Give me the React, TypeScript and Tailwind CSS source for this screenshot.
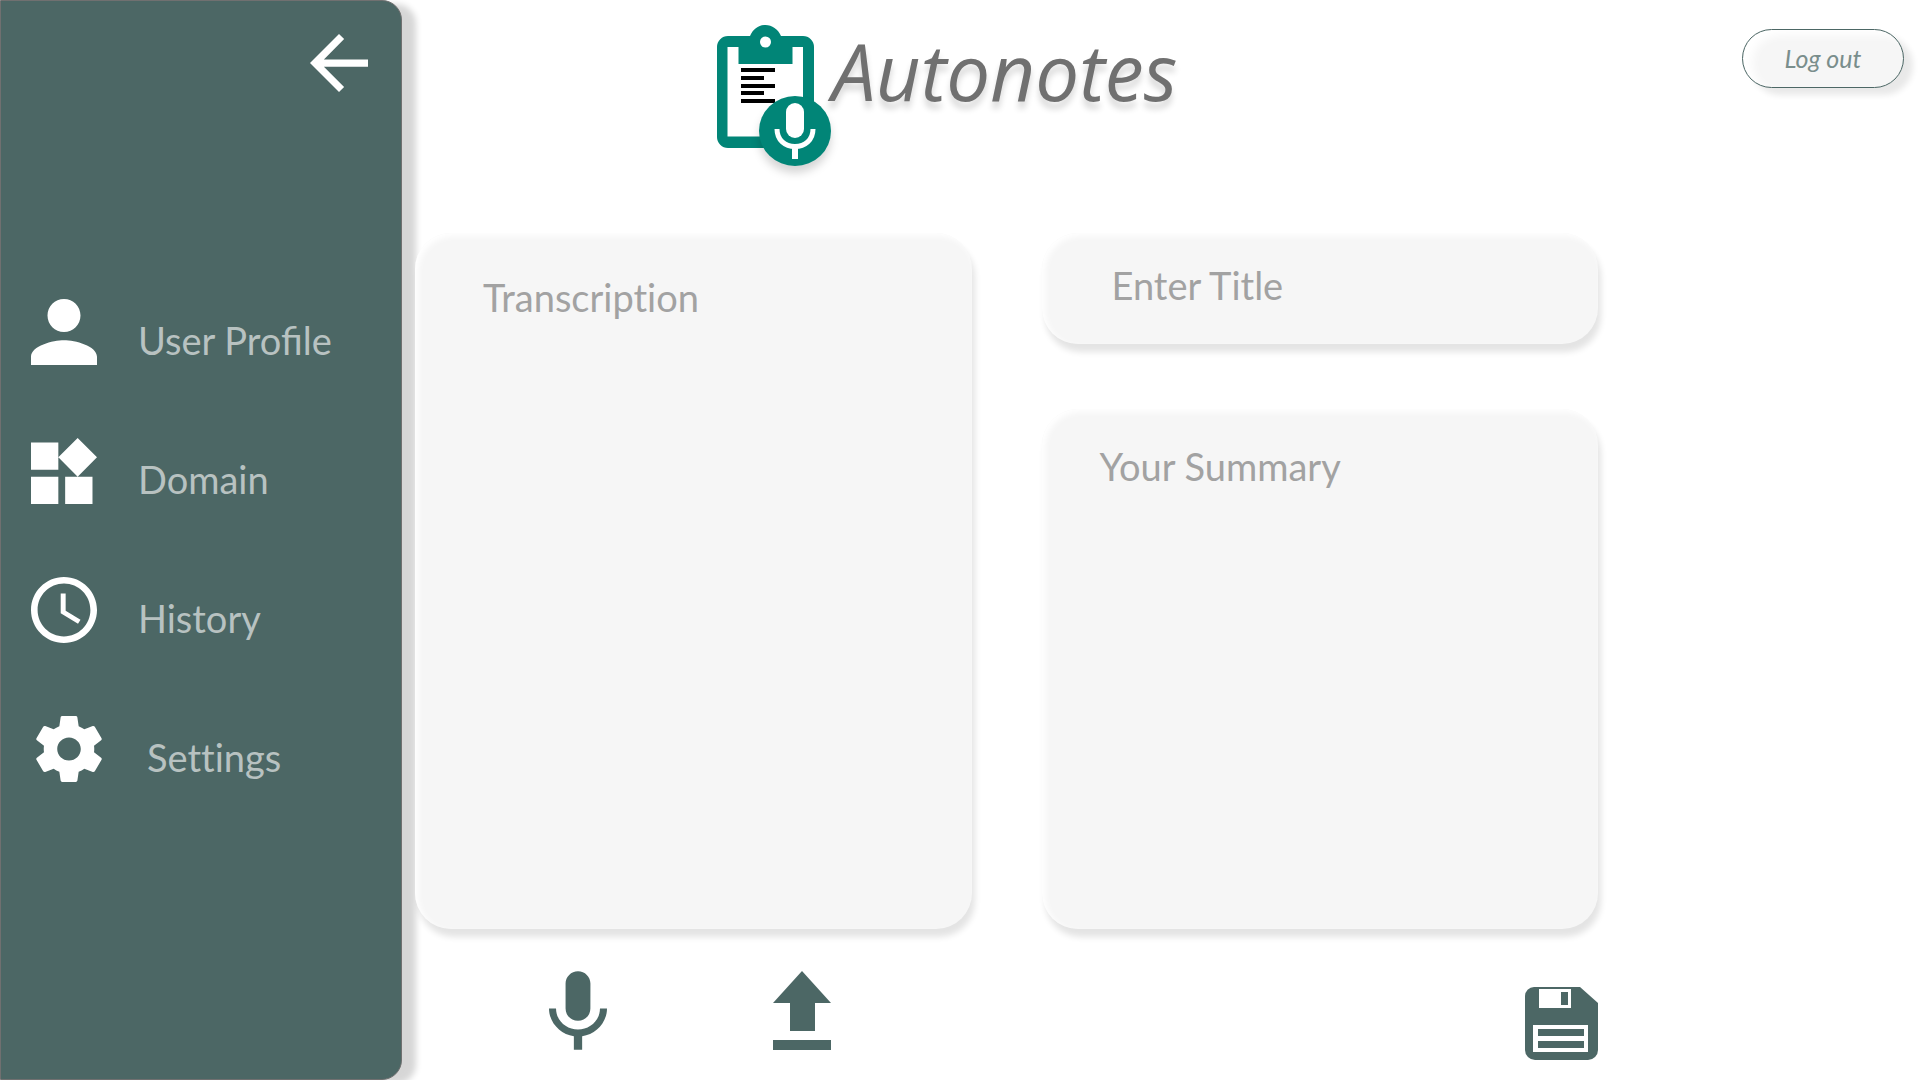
import type { ReactNode } from "react";

const FIELD =
  "block w-full resize-none rounded-[36px] bg-[#f6f6f6] text-[38px] leading-[44px] text-[#707070] [font-variant-ligatures:none] placeholder:text-[#a2a2a2] placeholder:opacity-100 outline-none shadow-[3px_8px_6px_rgba(0,0,0,0.11),inset_3px_3px_6px_#ffffff]";

function Logo() {
  return (
    <svg className="h-36 w-[115px] shrink-0 overflow-visible" viewBox="0 0 115 144" aria-hidden="true">
      <path
        fill="#018577"
        fillRule="evenodd"
        d="M11 11H33C36 4 42 0 48.500 0S61 4 64 11H86A11 11 0 0 1 97 22V112A11 11 0 0 1 86 123H11A11 11 0 0 1 0 112V22A11 11 0 0 1 11 11ZM10.500 22V111.500H86V22H75.500V39H21.500V22ZM48.500 11.500A5.500 5.500 0 1 0 48.500 22.500A5.500 5.500 0 1 0 48.500 11.500Z"
      />
      <path d="M24 43h34v4H24zM24 51h23v4H24zM24 59h34v4H24zM24 66h23v4H24zM24 74h34v4H24z" fill="#000" />
      <g style={{ filter: "drop-shadow(0 7px 4px rgba(0,0,0,0.16))" }}>
        <ellipse cx="78" cy="106" rx="36" ry="35" fill="#018577" />
      </g>
      <rect x="69" y="78" width="18" height="35" rx="9" fill="#fff" />
      <path d="M60 104C60 115 68 121.500 78 121.500S96 115 96 104" fill="none" stroke="#fff" strokeWidth="5" />
      <path d="M75 121h6v13h-6z" fill="#fff" />
    </svg>
  );
}

function NavItem({
  label,
  viewBox,
  path,
  className = "pl-[30px] gap-[41px]",
}: {
  label: string;
  viewBox: string;
  path: ReactNode;
  className?: string;
}) {
  return (
    <li>
      <a href="#" className={"flex h-[66px] items-start " + className}>
        <svg className="size-[66px] shrink-0 fill-white" viewBox={viewBox} preserveAspectRatio="none" aria-hidden="true">
          {path}
        </svg>
        <span className="pt-[19px] text-[38px] leading-[44px] text-[#b8c2c1]">{label}</span>
      </a>
    </li>
  );
}

function Sidebar() {
  return (
    <aside className="w-[402px] shrink-0 rounded-r-[20px] border border-[#707070] bg-[#4c6765] shadow-[14px_4px_6px_rgba(0,0,0,0.16)]">
      <div className="flex justify-end pt-[33px] pr-[33px]">
        <button type="button" aria-label="Collapse menu">
          <svg className="size-[58px] fill-white" viewBox="4 4 16 16" aria-hidden="true">
            <path d="M20 11H7.830l5.590-5.590L12 4l-8 8 8 8 1.410-1.410L7.830 13H20v-2z" />
          </svg>
        </button>
      </div>
      <nav className="pt-[207px]">
        <ul className="flex flex-col gap-[73px]">
          <NavItem
            label="User Profile"
            viewBox="4 4 16 16"
            path={<path d="M12 12c2.210 0 4-1.790 4-4s-1.790-4-4-4-4 1.790-4 4 1.790 4 4 4zm0 2c-2.670 0-8 1.340-8 4v2h16v-2c0-2.660-5.330-4-8-4z" />}
          />
          <NavItem
            label="Domain"
            viewBox="3 1.690 19.320 19.310"
            path={<path d="M13 13v8h8v-8h-8zM3 21h8v-8H3v8zM3 3v8h8V3H3zm13.660-1.310L11 7.340 16.660 13l5.660-5.660-5.660-5.650z" />}
          />
          <NavItem
            label="History"
            viewBox="2 2 20 20"
            path={<path d="M11.990 2C6.470 2 2 6.480 2 12s4.470 10 9.990 10C17.520 22 22 17.520 22 12S17.520 2 11.990 2zM12 20c-4.420 0-8-3.580-8-8s3.580-8 8-8 8 3.580 8 8-3.580 8-8 8zm.5-13H11v6l5.250 3.150.75-1.230-4.500-2.670z" />}
          />
          <NavItem
            label="Settings"
            className="pl-[35px] gap-[45px] [font-variant-ligatures:none]"
            viewBox="2.200 2 19.600 20"
            path={<path d="M19.430 12.980c.04-.32.07-.64.07-.98s-.03-.66-.07-.98l2.110-1.650c.19-.15.24-.42.12-.64l-2-3.460c-.12-.22-.39-.3-.61-.22l-2.490 1c-.52-.4-1.080-.73-1.690-.98l-.38-2.650C14.460 2.180 14.250 2 14 2h-4c-.25 0-.46.18-.49.42l-.38 2.650c-.61.25-1.170.59-1.690.98l-2.490-1c-.23-.09-.49 0-.61.22l-2 3.460c-.13.22-.07.49.12.64l2.110 1.650c-.04.32-.07.65-.07.98s.03.66.07.98l-2.110 1.650c-.19.15-.24.42-.12.64l2 3.460c.12.22.39.3.61.22l2.490-1c.52.4 1.080.73 1.690.98l.38 2.650c.03.24.24.42.49.42h4c.25 0 .46-.18.49-.42l.38-2.650c.61-.25 1.170-.59 1.690-.98l2.490 1c.23.09.49 0 .61-.22l2-3.460c.12-.22.07-.49-.12-.64l-2.110-1.650zM12 15.500c-1.930 0-3.500-1.570-3.500-3.500s1.570-3.500 3.500-3.500 3.500 1.570 3.500 3.500-1.570 3.500-3.500 3.500z" />}
          />
        </ul>
      </nav>
    </aside>
  );
}

export default function App() {
  return (
    <div className="flex min-h-screen bg-white font-['Lato','Open_Sans',sans-serif]">
      <Sidebar />
      <main className="relative flex min-w-0 flex-1 flex-col pl-[13px]">
        <header className="flex h-[233px] items-start justify-between pr-4 pl-[302px]">
          <div className="flex items-start pt-[25px]">
            <Logo />
            <h1 className="font-['Open_Sans','Lato',sans-serif] text-[78px] leading-[92px] text-[#707070] italic [text-shadow:0_7px_6px_rgba(0,0,0,0.16)]">
              Autonotes
            </h1>
          </div>
          <button
            type="button"
            className="mt-[29px] h-[59px] w-[162px] rounded-full border border-[#4c6765] bg-[#f6f6f6] text-[25px] text-[#7a8e8c] italic shadow-[9px_7px_6px_rgba(0,0,0,0.09),inset_9px_5px_10px_#ffffff]"
          >
            Log out
          </button>
        </header>

        <div className="grid flex-1 grid-cols-2 gap-[70px] pr-[322px]">
          <textarea aria-label="Transcription" placeholder="Transcription" className={FIELD + " h-full pt-[42px] pr-8 pl-[68px]"} />
          <div className="flex flex-col gap-[65px]">
            <input type="text" aria-label="Title" placeholder="Enter Title" className={FIELD + " h-[111px] pr-8 pb-2 pl-[70px]"} />
            <textarea aria-label="Summary" placeholder="Your Summary" className={FIELD + " flex-1 pt-[35px] pr-8 pl-[58px]"} />
          </div>
        </div>

        <div className="flex h-[151px] items-start justify-between pr-[322px] pl-[134px]">
          <div className="flex gap-[166px] pt-[42px]">
            <button type="button" aria-label="Record">
              <svg className="h-[79px] w-[58px] fill-[#4c6765]" viewBox="5 2 14 19" aria-hidden="true">
                <path d="M12 14c1.660 0 2.990-1.340 2.990-3L15 5c0-1.660-1.340-3-3-3S9 3.340 9 5v6c0 1.660 1.340 3 3 3zm5.300-3c0 3-2.540 5.100-5.300 5.100S6.700 14 6.700 11H5c0 3.410 2.720 6.230 6 6.720V21h2v-3.280c3.280-.48 6-3.300 6-6.720h-1.700z" />
              </svg>
            </button>
            <button type="button" aria-label="Upload">
              <svg className="h-[79px] w-[58px] fill-[#4c6765]" viewBox="0 0 58 79" aria-hidden="true">
                <path d="M29 0L58 32H42V60H17V32H0ZM0 69H58V79H0Z" />
              </svg>
            </button>
          </div>
          <button type="button" aria-label="Save" className="mt-[58px]">
            <svg className="size-[73px]" viewBox="0 0 73 73" aria-hidden="true">
              <path fill="#4c6765" d="M9 0H55L73 16V63A10 10 0 0 1 63 73H10A10 10 0 0 1 0 63V9A9 9 0 0 1 9 0Z" />
              <path
                fill="#fff"
                fillRule="evenodd"
                d="M14 2H46V21H14ZM36 5V18H43V5ZM8 38H63V65H8ZM13 42V49H59V42ZM13 54V61H59V54Z"
              />
            </svg>
          </button>
        </div>
      </main>
    </div>
  );
}
